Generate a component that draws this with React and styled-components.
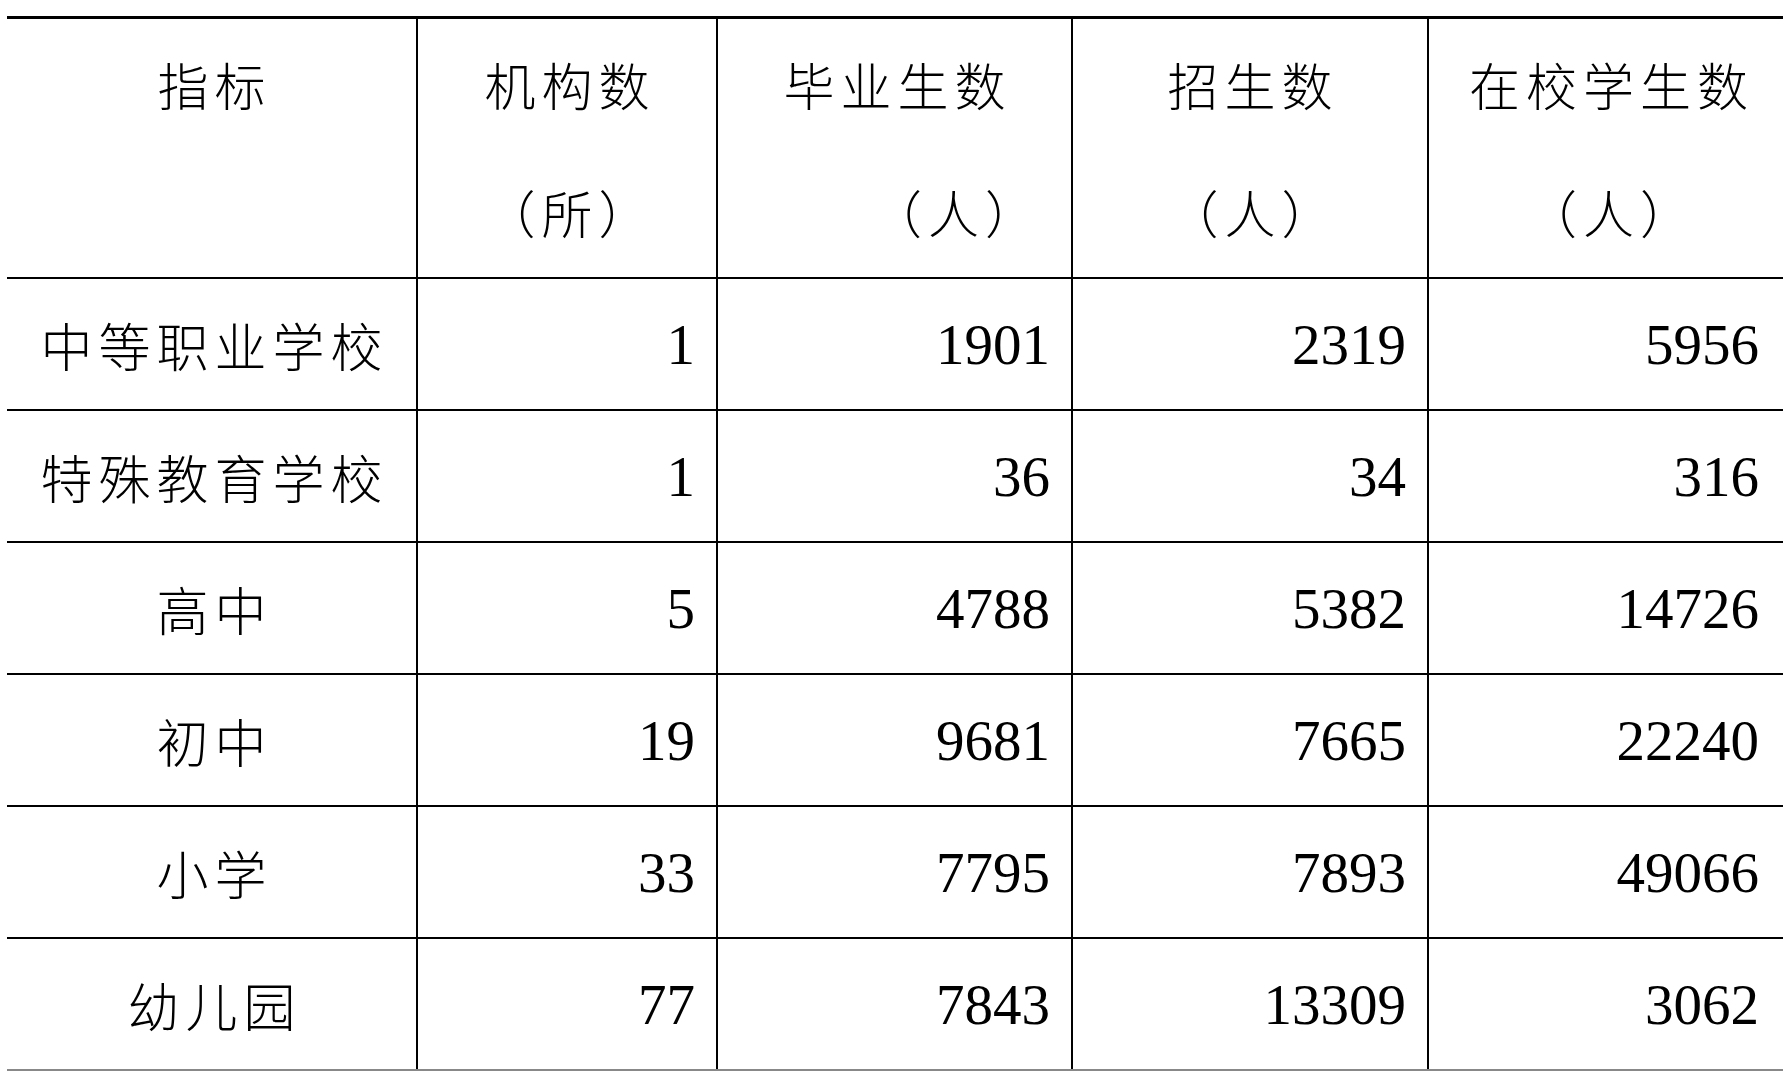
import React from "react";
import styled, { createGlobalStyle } from "styled-components";

const Global = createGlobalStyle`
  html, body {
    margin: 0;
    padding: 0;
    background: #ffffff;
    overflow: hidden;
  }
  body {
    font-family: "Noto Sans CJK SC", "Liberation Serif", serif;
    color: #000;
  }
`;

const Page = styled.div`
  padding: 16px 0 0 7px;
  width: 1800px;
`;

const Table = styled.table`
  border-collapse: collapse;
  table-layout: fixed;
  width: 1781px;
`;

const HeadCell = styled.th`
  height: 258px;
  padding: 0;
  border-top: 3px solid #000;
  border-bottom: 2px solid #000;
  border-left: ${(p) => (p.$first ? "none" : "2px solid #000")};
  font-family: "Noto Sans CJK SC", sans-serif;
  font-weight: 300;
  font-size: 51px;
  text-align: center;
  vertical-align: middle;
`;

const HeadLine = styled.div`
  line-height: 128px;
  letter-spacing: 6px;
  padding-left: ${(p) => 6 + (p.$shift || 0) * 2}px;
  white-space: nowrap;
`;

const LabelCell = styled.td`
  height: 130px;
  padding: 0 0 0 6px;
  border-bottom: ${(p) => (p.$last ? "2px solid #888" : "2px solid #000")};
  font-family: "Noto Sans CJK SC", sans-serif;
  font-weight: 300;
  font-size: 52px;
  letter-spacing: 6px;
  text-align: center;
  vertical-align: middle;
  white-space: nowrap;
`;

const NumCell = styled.td`
  height: 130px;
  padding: 0 ${(p) => p.$pad}px 0 0;
  border-bottom: ${(p) => (p.$last ? "2px solid #888" : "2px solid #000")};
  border-left: 2px solid #000;
  font-family: "Liberation Serif", "Times New Roman", serif;
  font-size: 57px;
  text-align: right;
  vertical-align: middle;
`;

const Row = styled.tr``;

const columns = [
  { w: 410, lines: ["指标"] },
  { w: 300, lines: ["机构数", "（所）"] },
  { w: 355, lines: ["毕业生数", "（人）"], shift: 59 },
  { w: 356, lines: ["招生数", "（人）"] },
  { w: 360, lines: ["在校学生数", "（人）"] },
];

const rows = [
  ["中等职业学校", "1", "1901", "2319", "5956"],
  ["特殊教育学校", "1", "36", "34", "316"],
  ["高中", "5", "4788", "5382", "14726"],
  ["初中", "19", "9681", "7665", "22240"],
  ["小学", "33", "7795", "7893", "49066"],
  ["幼儿园", "77", "7843", "13309", "3062"],
];

export default function App() {
  return (
    <Page>
      <Global />
      <Table>
        <colgroup>
          {columns.map((c, i) => (
            <col key={i} style={{ width: c.w }} />
          ))}
        </colgroup>
        <thead>
          <Row>
            {columns.map((c, i) => (
              <HeadCell key={i} $first={i === 0}>
                {c.lines.length === 1 ? (
                  <>
                    <HeadLine>{c.lines[0]}</HeadLine>
                    <HeadLine>&nbsp;</HeadLine>
                  </>
                ) : (
                  c.lines.map((l, j) => (
                    <HeadLine key={j} $shift={j === 1 ? c.shift : 0}>
                      {l}
                    </HeadLine>
                  ))
                )}
              </HeadCell>
            ))}
          </Row>
        </thead>
        <tbody>
          {rows.map((r, ri) => {
            const last = ri === rows.length - 1;
            return (
              <Row key={ri}>
                <LabelCell $last={last}>{r[0]}</LabelCell>
                {r.slice(1).map((v, vi) => (
                  <NumCell key={vi} $last={last} $pad={vi === 3 ? 29 : 21}>
                    {v}
                  </NumCell>
                ))}
              </Row>
            );
          })}
        </tbody>
      </Table>
    </Page>
  );
}
